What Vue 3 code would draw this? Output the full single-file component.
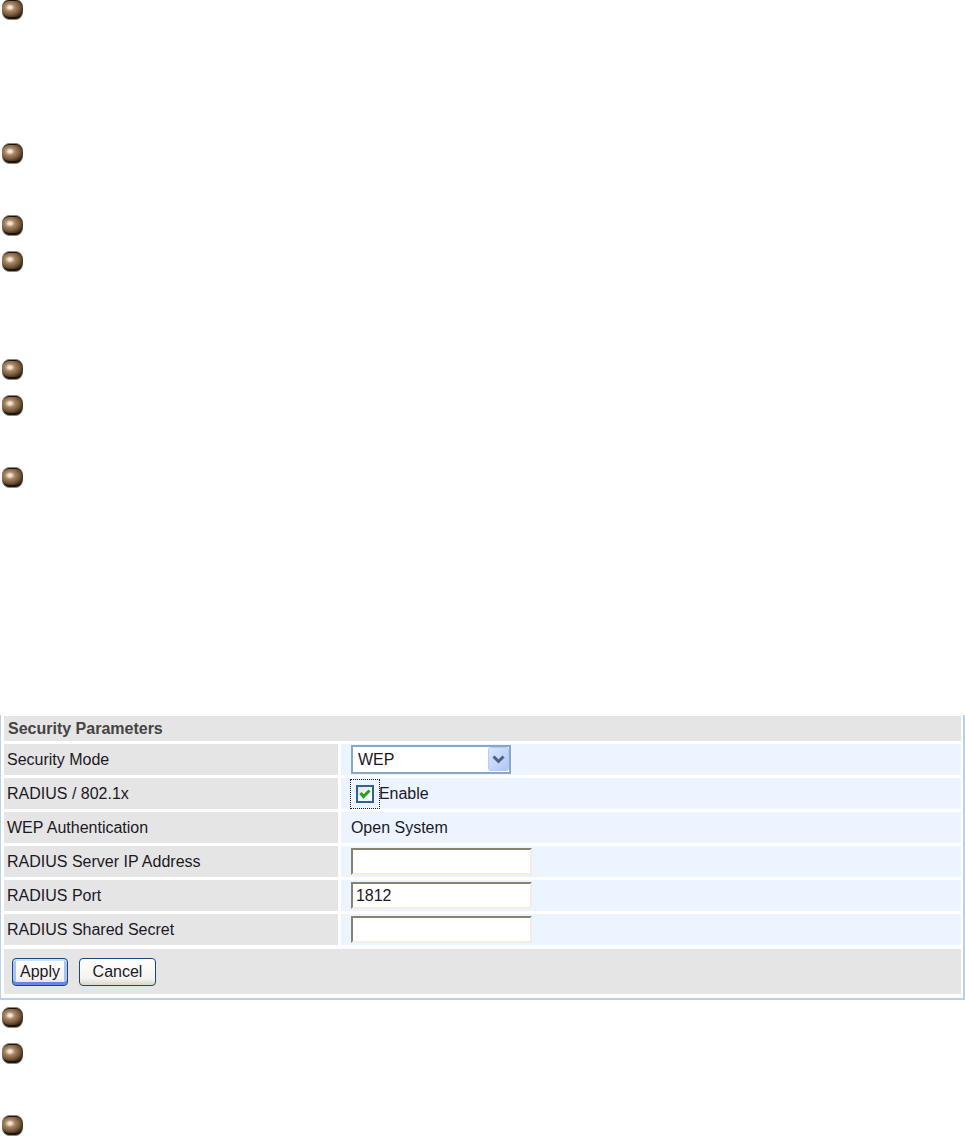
<script setup>
import { ref } from 'vue'

const topNotes = ['h4', 'h2', 'h1', 'h3', 'h1', 'h2', 'last']
const bottomNotes = ['h1', 'h2', 'h1']

const mode = ref('WEP')
const radius = ref(true)
const server = ref('')
const port = ref('1812')
const secret = ref('')
</script>

<template>
  <main class="page">
    <svg class="defs" width="0" height="0" aria-hidden="true">
      <defs>
        <radialGradient id="bead" cx="0.38" cy="0.4" r="0.68">
          <stop offset="0" stop-color="#fff6ea" />
          <stop offset="0.14" stop-color="#ecd8c2" />
          <stop offset="0.34" stop-color="#a98864" />
          <stop offset="0.7" stop-color="#75583a" />
          <stop offset="1" stop-color="#33241a" />
        </radialGradient>
      </defs>
    </svg>

    <ul class="notes">
      <li v-for="(size, i) in topNotes" :key="i" :class="size">
        <svg class="bead" viewBox="0 0 21 21" aria-hidden="true">
          <rect x="0.5" y="0.5" width="20" height="20" rx="7" fill="#1c150e" stroke="#8d8781" stroke-width="1" />
          <rect x="0" y="2" width="21" height="16" rx="7" fill="url(#bead)" />
        </svg>
      </li>
    </ul>

    <form class="panel" @submit.prevent>
      <h2 class="title">Security Parameters</h2>

      <div class="row">
        <label class="name" for="mode">Security Mode</label>
        <div class="value">
          <span class="combo">
            <select id="mode" v-model="mode">
              <option>WEP</option>
            </select>
            <svg class="drop" viewBox="0 0 21 24" aria-hidden="true">
              <defs>
                <linearGradient id="dropfill" x1="0" y1="0" x2="1" y2="1">
                  <stop offset="0" stop-color="#dce6fd" />
                  <stop offset="1" stop-color="#adc6f8" />
                </linearGradient>
              </defs>
              <rect x="0.5" y="0.5" width="20" height="23" rx="2" fill="url(#dropfill)" stroke="#b6cbf5" />
              <path d="M5.5 9.5L10.5 14.5L15.5 9.5" fill="none" stroke="#4d6185" stroke-width="3" />
            </svg>
          </span>
        </div>
      </div>

      <div class="row">
        <span class="name">RADIUS / 802.1x</span>
        <div class="value">
          <label class="check">
            <span class="focus">
              <input v-model="radius" type="checkbox" />
              <svg v-if="radius" class="tick" viewBox="0 0 18 18" aria-hidden="true">
                <path d="M4.5 8L7.5 11.5L13.5 5.5" fill="none" stroke="#21a121" stroke-width="3" />
              </svg>
            </span>Enable
          </label>
        </div>
      </div>

      <div class="row">
        <span class="name">WEP Authentication</span>
        <div class="value">Open System</div>
      </div>

      <div class="row">
        <label class="name" for="server">RADIUS Server IP Address</label>
        <div class="value"><input id="server" v-model="server" class="field" type="text" /></div>
      </div>

      <div class="row">
        <label class="name" for="port">RADIUS Port</label>
        <div class="value"><input id="port" v-model="port" class="field" type="text" /></div>
      </div>

      <div class="row">
        <label class="name" for="secret">RADIUS Shared Secret</label>
        <div class="value"><input id="secret" v-model="secret" class="field" type="text" /></div>
      </div>

      <div class="actions">
        <button class="btn primary" type="submit">Apply</button>
        <button class="btn" type="button">Cancel</button>
      </div>
    </form>

    <ul class="notes after">
      <li v-for="(size, i) in bottomNotes" :key="i" :class="size">
        <svg class="bead" viewBox="0 0 21 21" aria-hidden="true">
          <rect x="0.5" y="0.5" width="20" height="20" rx="7" fill="#1c150e" stroke="#8d8781" stroke-width="1" />
          <rect x="0" y="2" width="21" height="16" rx="7" fill="url(#bead)" />
        </svg>
      </li>
    </ul>
  </main>
</template>

<style>
body {
  background: #fff;
}
</style>

<style scoped>
.page {
  display: flex;
  flex-direction: column;
  overflow: hidden;
  font-family: "Liberation Sans", Arial, sans-serif;
  font-size: 16px;
  line-height: 20px;
  color: #1c1826;
}

.defs {
  position: absolute;
}

.notes {
  list-style: none;
  margin: -1px 0 0;
  padding: 0 0 0 2px;
}

.after {
  margin: 0;
  padding-top: 7px;
}

.bead {
  display: block;
  width: 21px;
  height: 21px;
}

.h1 { height: 36px; }
.h2 { height: 72px; }
.h3 { height: 108px; }
.h4 { height: 144px; }
.last { height: 248px; }
.after .h1:last-child { height: 21px; }

.panel {
  display: flex;
  flex-direction: column;
  gap: 3px;
  padding: 1px 2px 4px 3px;
  border: solid #b9d0ea;
  border-width: 0 2px 2px 1px;
}

.title {
  margin: 0;
  padding: 3px 4px;
  font-size: 16px;
  line-height: 19px;
  color: #444;
  background: #e5e5e5;
}

.row {
  display: grid;
  grid-template-columns: 35fr 65fr;
  gap: 3px;
  height: 31px;
}

.name,
.value {
  display: flex;
  align-items: center;
}

.name {
  padding-left: 3px;
  background: #e5e5e5;
}

.value {
  padding-left: 10px;
  background: #ebf4ff;
}

.combo {
  position: relative;
  display: flex;
}

.combo select {
  appearance: none;
  box-sizing: border-box;
  width: 160px;
  height: 29px;
  padding: 0 26px 0 5px;
  border: 2px solid #89a8c8;
  border-radius: 0;
  background: #fff;
  font: inherit;
  color: inherit;
}

.drop {
  position: absolute;
  top: 2px;
  right: 2px;
  width: 21px;
  height: 24px;
  pointer-events: none;
}

.check {
  display: flex;
  align-items: center;
}

.focus {
  position: relative;
  display: flex;
  box-sizing: border-box;
  width: 30px;
  height: 30px;
  padding: 5px;
  margin: 0 -1px 0 -1px;
  border: 1px dotted #222;
}

.focus input {
  appearance: none;
  width: 18px;
  height: 18px;
  margin: 0;
  border: 2px solid #2f628f;
  background: linear-gradient(135deg, #e2e2dc, #fff);
}

.tick {
  position: absolute;
  top: 5px;
  left: 5px;
  width: 18px;
  height: 18px;
  pointer-events: none;
}

.field {
  box-sizing: border-box;
  width: 181px;
  height: 27px;
  padding: 0 3px;
  border: 2px solid;
  border-color: #85836f #f3efe0 #f3efe0 #85836f;
  background: #fff;
  font: inherit;
  color: inherit;
}

.actions {
  display: flex;
  align-items: center;
  gap: 11px;
  height: 45px;
  margin-top: 1px;
  padding-left: 8px;
  background: #e5e5e5;
}

.btn {
  box-sizing: border-box;
  width: 77px;
  height: 28px;
  padding: 0;
  border: 1px solid #174a7c;
  border-radius: 4px;
  background: linear-gradient(#fff, #f4f3ee 75%, #dcd7cb);
  font: inherit;
  color: inherit;
}

.primary {
  width: 56px;
  box-shadow: inset 0 2px #cfe0fc, inset 0 -3px #6488df, inset 3px 0 #a9c2f2, inset -3px 0 #a9c2f2;
}
</style>
